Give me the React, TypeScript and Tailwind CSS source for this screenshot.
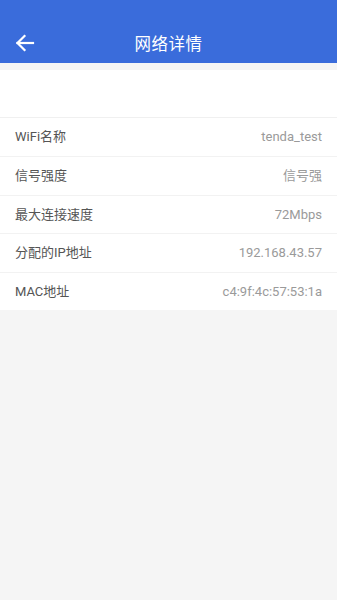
import React from "react";

const rows: [string, string][] = [
  ["WiFi名称", "tenda_test"],
  ["信号强度", "信号强"],
  ["最大连接速度", "72Mbps"],
  ["分配的IP地址", "192.168.43.57"],
  ["MAC地址", "c4:9f:4c:57:53:1a"],
];

export default function App() {
  return (
    <div
      className="w-[337px] h-[600px] bg-[#f5f5f5] flex flex-col"
      style={{ fontFamily: '"Roboto", "Noto Sans CJK SC", sans-serif' }}
    >
      <div className="h-[63px] bg-[#3a6cdb] flex items-end">
        <div className="relative h-[39px] w-full flex items-center justify-center pt-[4px]">
          <svg
            className="absolute left-[15px] top-[10px]"
            width="20"
            height="18"
            viewBox="0 0 20 18"
            fill="none"
            stroke="white"
            strokeWidth="2.2"
            strokeLinecap="square"
          >
            <path d="M2.5 9 H18" />
            <path d="M9.5 2 L2.5 9 L9.5 16" />
          </svg>
          <span className="text-white text-[16.5px] tracking-[0.5px]">网络详情</span>
        </div>
      </div>
      <div className="h-[7px]" />
      <div className="h-[47px] bg-white" />
      <div className="h-px bg-[#f0f0f0]" />
      <div className="bg-white">
        {rows.map(([k, v], i) => (
          <div
            key={k}
            className={`h-[38.4px] flex items-center justify-between px-[15px] ${
              i > 0 ? "border-t border-[#f2f2f2]" : ""
            }`}
          >
            <span className="text-[13px] text-[#555555]">{k}</span>
            <span className="text-[13px] text-[#9a9a9a]">{v}</span>
          </div>
        ))}
      </div>
    </div>
  );
}
